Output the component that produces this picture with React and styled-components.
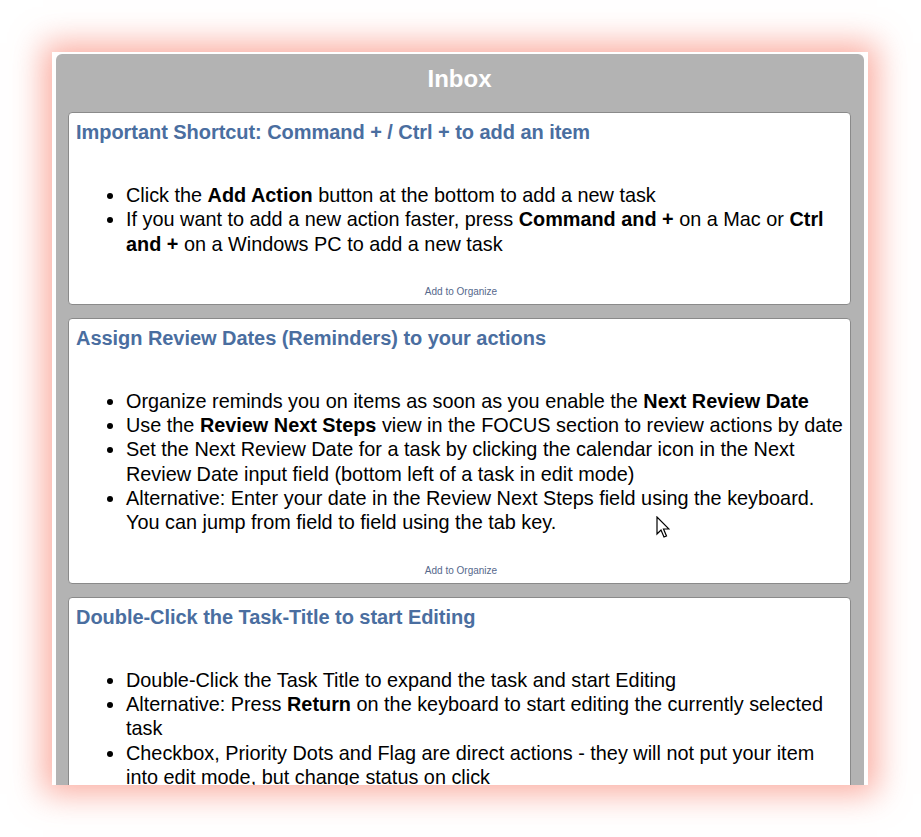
import React from 'react';
import styled, { createGlobalStyle } from 'styled-components';

const GlobalStyle = createGlobalStyle`
  html, body {
    margin: 0;
    padding: 0;
    background: #ffffff;
  }
  body {
    font-family: "Liberation Sans", Arial, sans-serif;
  }
`;

const Page = styled.div`
  position: relative;
  width: 921px;
  height: 837px;
  padding: 52px 0 0 52px;
  box-sizing: border-box;
  overflow: hidden;
`;

const Frame = styled.div`
  width: 816px;
  height: 733px;
  box-sizing: border-box;
  padding: 2px 4px 0 4px;
  background: #ffffff;
  box-shadow: 0 0 30px 9px rgba(248, 120, 100, 0.6);
  overflow: hidden;
`;

const Panel = styled.div`
  height: 100%;
  background: #b3b3b3;
  border-radius: 6px 6px 0 0;
  padding: 0 13px 0 12px;
  overflow: hidden;
`;

const Header = styled.div`
  height: 58px;
  display: flex;
  align-items: center;
  justify-content: center;
  padding-bottom: 8px;
  box-sizing: border-box;
  color: #ffffff;
  font-weight: bold;
  font-size: 24px;
`;

const Card = styled.div`
  background: #ffffff;
  border: 1px solid #8a8a8a;
  border-radius: 4px;
  padding: 7px 4px 6px 7px;
  margin-bottom: 13px;
`;

const Title = styled.div`
  color: #4a6ea0;
  font-weight: bold;
  font-size: 20px;
  line-height: 24px;
  letter-spacing: -0.05px;
`;

const List = styled.ul`
  margin: 39px 0 0 0;
  padding-left: 50px;
  font-size: 19.85px;
  line-height: 24.3px;
  color: #000000;
`;

const Footer = styled.div`
  margin-top: 30px;
  text-align: center;
  font-size: 10px;
  line-height: 12px;
  color: #56688c;
`;

const Cursor = styled.svg`
  position: absolute;
  left: 656px;
  top: 516px;
`;

const cards = [
  {
    title: 'Important Shortcut: Command + / Ctrl + to add an item',
    items: [
      <>Click the <b>Add Action</b> button at the bottom to add a new task</>,
      <>If you want to add a new action faster, press <b>Command and +</b> on a Mac or <b>Ctrl and +</b> on a Windows PC to add a new task</>,
    ],
  },
  {
    title: 'Assign Review Dates (Reminders) to your actions',
    items: [
      <>Organize reminds you on items as soon as you enable the <b>Next Review Date</b></>,
      <>Use the <b>Review Next Steps</b> view in the FOCUS section to review actions by date</>,
      <>Set the Next Review Date for a task by clicking the calendar icon in the Next Review Date input field (bottom left of a task in edit mode)</>,
      <>Alternative: Enter your date in the Review Next Steps field using the keyboard. You can jump from field to field using the tab key.</>,
    ],
  },
  {
    title: 'Double-Click the Task-Title to start Editing',
    items: [
      <>Double-Click the Task Title to expand the task and start Editing</>,
      <>Alternative: Press <b>Return</b> on the keyboard to start editing the currently selected task</>,
      <>Checkbox, Priority Dots and Flag are direct actions - they will not put your item into edit mode, but change status on click</>,
      <>Drag and drop an item onto another list to move it there</>,
    ],
  },
];

export default function App() {
  return (
    <>
      <GlobalStyle />
      <Page>
        <Frame>
          <Panel>
            <Header>Inbox</Header>
            {cards.map((card) => (
              <Card key={card.title}>
                <Title>{card.title}</Title>
                <List>
                  {card.items.map((item, i) => (
                    <li key={i}>{item}</li>
                  ))}
                </List>
                <Footer>Add to Organize</Footer>
              </Card>
            ))}
          </Panel>
        </Frame>
        <Cursor width="14" height="24" viewBox="0 0 14 24">
          <path
            d="M1 1 L1 18 L5 14 L8 21 L10.5 20 L7.5 13 L13 13 Z"
            fill="#ffffff"
            stroke="#000000"
            strokeWidth="1.2"
            strokeLinejoin="miter"
          />
        </Cursor>
      </Page>
    </>
  );
}
